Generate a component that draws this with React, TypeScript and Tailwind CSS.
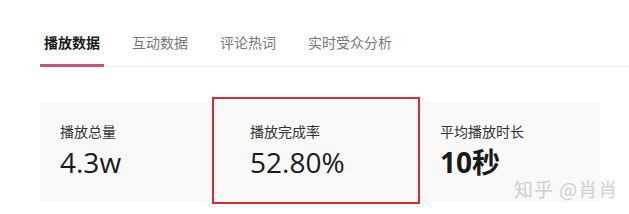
import React from "react";

const tabs = ["播放数据", "互动数据", "评论热词", "实时受众分析"];

const stats = [
  { label: "播放总量", value: "4.3w", bold: false },
  { label: "播放完成率", value: "52.80%", bold: false },
  { label: "平均播放时长", value: "10秒", bold: true },
];

export default function App() {
  return (
    <div
      className="relative w-[629px] h-[214px] bg-white overflow-hidden"
      style={{ fontFamily: '"Noto Sans CJK SC", "Open Sans", sans-serif' }}
    >
      {/* Tabs */}
      <div className="ml-[40px] flex gap-6 pt-[32px] border-b border-[#e8e8e8]">
        {tabs.map((t, i) => (
          <div
            key={t}
            className={`px-[4px] pb-[12px] -mb-px text-[14px] leading-[20px] border-b-[3px] ${
              i === 0
                ? "border-[#c9507a] text-[#1a1a1a] font-bold"
                : "border-transparent text-[#777]"
            }`}
          >
            {t}
          </div>
        ))}
      </div>

      {/* Stat cards */}
      <div className="ml-[40px] mt-[35px] w-[560px] h-[100px] bg-[#f9f9f9] grid grid-cols-[190px_190px_180px]">
        {stats.map((s) => (
          <div key={s.label} className="pl-[20px] pt-[19px]">
            <div className="text-[14px] leading-[20px] text-[#333]">{s.label}</div>
            <div
              className={`mt-[3px] text-[28px] leading-[36px] text-[#1a1a1a] ${
                s.bold ? "font-bold" : ""
              }`}
              style={{ fontFamily: '"Open Sans", "Noto Sans CJK SC", sans-serif' }}
            >
              {s.value}
            </div>
          </div>
        ))}
      </div>

      {/* Highlight annotation */}
      <div className="absolute left-[212px] top-[97px] w-[208px] h-[107px] border-2 border-[#e0282e]" />

      {/* Watermark */}
      <div className="absolute left-[514px] top-[177px] text-[19px] leading-[24px] text-[#cfcfcf] tracking-[1px]">
        知乎 @肖肖
      </div>
    </div>
  );
}
